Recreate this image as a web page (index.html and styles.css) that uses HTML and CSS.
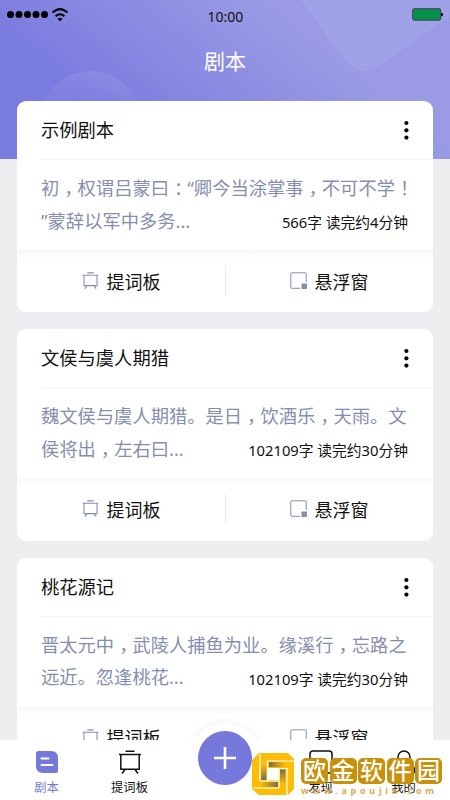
FILE: index.html
```html
<!DOCTYPE html>
<html lang="zh-CN">
<head>
<meta charset="utf-8">
<title>剧本</title>
<link rel="stylesheet" href="styles.css">
</head>
<body>
<svg width="0" height="0" class="defs">
  <symbol id="board" viewBox="0 0 24 24"><path d="M7.5 1.2h9M1 4.5h22M2.8 4.5v14.7h18.4V4.5M7 19.5l-3 4M17 19.5l3 4" fill="none" stroke="currentColor" stroke-width="1.5"/></symbol>
  <symbol id="float" viewBox="0 0 17 17"><path d="M10 16.3H1.8a1 1 0 0 1-1-1V1.8a1 1 0 0 1 1-1h13.4a1 1 0 0 1 1 1V10" fill="none" stroke="currentColor" stroke-width="1"/><rect x="11.5" y="11.5" width="5.5" height="5.5" rx=".8" fill="currentColor"/></symbol>
  <symbol id="more" viewBox="0 0 6 20"><circle cx="3.4" cy="3" r="2.1"/><circle cx="3.4" cy="10.3" r="2.1"/><circle cx="3.4" cy="17.6" r="2.1"/></symbol>
</svg>
<div class="app">
  <svg class="hero" viewBox="0 0 450 159">
    <defs>
      <linearGradient id="sky" gradientUnits="userSpaceOnUse" x1="150" y1="155" x2="270" y2="5"><stop offset="0" stop-color="#7a7bdf"/><stop offset="1" stop-color="#9a9be4"/></linearGradient>
      <linearGradient id="moon" x1="0" y1="0" x2="0" y2="1"><stop offset="0" stop-color="#fff" stop-opacity=".08"/><stop offset=".5" stop-color="#fff" stop-opacity="0"/></linearGradient>
    </defs>
    <rect width="450" height="159" fill="url(#sky)"/>
    <circle cx="90" cy="121" r="50" fill="url(#moon)"/>
    <path d="M301 0L342 56Q358 79 378 66L450 17V0Z" fill="#a4a6ea" opacity=".6"/>
  </svg>
  <div class="status">
    <svg width="64" height="16" viewBox="0 0 64 16"><g><circle cx="3.500" cy="7.500" r="3.500"/><circle cx="12" cy="7.500" r="3.500"/><circle cx="20.500" cy="7.500" r="3.500"/><circle cx="29" cy="7.500" r="3.500"/><circle cx="37.500" cy="7.500" r="3.500"/></g><g fill="none" stroke="#000" stroke-width="2"><path d="M45.600 5.600q7.400-7 14.800 0M48.600 9.200q4.400-4 8.800 0"/></g><path d="M50.500 11.800q2.500-2 5 0L53 14.500z"/></svg>
    <span class="time">10:00</span>
    <svg width="32" height="14" viewBox="0 0 32 14"><rect x=".7" y=".7" width="28" height="11.500" rx="1.500" fill="#059148" stroke="#4a3768"/><path d="M29 5h1q1 0 1 1.600t-1 1.600h-1z"/></svg>
  </div>
  <h1>剧本</h1>
  <main>
    <article class="card">
      <header><h2>示例剧本</h2><svg class="more"><use href="#more"/></svg></header>
      <div class="excerpt"><p>初<i>，</i>权谓吕蒙曰<i>：</i>“卿今当涂掌事<i>，</i>不可不学<i>！</i><br>”蒙辞以军中多务...</p><small>566字 读完约4分钟</small></div>
      <footer><a><svg><use href="#board"/></svg>提词板</a><a><svg><use href="#float"/></svg>悬浮窗</a></footer>
    </article>
    <article class="card">
      <header><h2>文侯与虞人期猎</h2><svg class="more"><use href="#more"/></svg></header>
      <div class="excerpt"><p>魏文侯与虞人期猎。是日<i>，</i>饮酒乐<i>，</i>天雨。文<br>侯将出<i>，</i>左右曰...</p><small>102109字 读完约30分钟</small></div>
      <footer><a><svg><use href="#board"/></svg>提词板</a><a><svg><use href="#float"/></svg>悬浮窗</a></footer>
    </article>
    <article class="card">
      <header><h2>桃花源记</h2><svg class="more"><use href="#more"/></svg></header>
      <div class="excerpt"><p>晋太元中<i>，</i>武陵人捕鱼为业。缘溪行<i>，</i>忘路之<br>远近。忽逢桃花...</p><small>102109字 读完约30分钟</small></div>
      <footer><a><svg><use href="#board"/></svg>提词板</a><a><svg><use href="#float"/></svg>悬浮窗</a></footer>
    </article>
  </main>
  <nav>
    <a class="on"><svg viewBox="0 0 24 24"><path d="M3.500 1H16q7 0 7 7v12.500q0 2.500-2.500 2.500H8q-7 0-7-7V3.500Q1 1 3.500 1z" fill="#7678dc"/><path d="M6.500 8.500h7M6.500 15h11" stroke="#fff" stroke-width="2" stroke-linecap="round"/></svg>剧本</a>
    <a><svg viewBox="0 0 24 24"><use href="#board"/></svg>提词板</a>
    <span></span>
    <a><svg viewBox="0 0 24 24"><rect x="1" y="1" width="22" height="22" rx="3" fill="none" stroke="#111" stroke-width="1.500"/><path d="M7 11h10" stroke="#111" stroke-width="1.500"/></svg>发现</a>
    <a><svg viewBox="0 0 24 24"><circle cx="12" cy="7" r="6" fill="none" stroke="#111" stroke-width="1.500"/><path d="M8 12Q1 15 1 22.500h22Q23 15 16 12" fill="none" stroke="#111" stroke-width="1.500"/></svg>我的</a>
  </nav>
  <div class="bump"></div>
  <div class="plus"><svg width="22" height="22" viewBox="0 0 22 22"><path d="M11 0v22M0 11h22" stroke="#fff" stroke-width="2.600"/></svg></div>
  <div class="mark">
    <svg width="43" height="43" viewBox="0 0 43 43">
      <defs>
        <linearGradient id="fh"><stop offset="0" stop-color="#7d6c45"/><stop offset="1" stop-color="#fdbd05"/></linearGradient>
        <linearGradient id="fv" x1="0" y1="1" x2="0" y2="0"><stop offset="0" stop-color="#7d6c45"/><stop offset=".8" stop-color="#fdbd05"/></linearGradient>
        <linearGradient id="fr" x1="1" x2="0"><stop offset="0" stop-color="#7d6c45"/><stop offset="1" stop-color="#fdbd05"/></linearGradient>
        <linearGradient id="fd" x1="0" y1="0" x2="0" y2="1"><stop offset="0" stop-color="#7d6c45"/><stop offset=".8" stop-color="#fdbd05"/></linearGradient>
      </defs>
      <path d="M7 0h29l6 6v30l-6 6H7l-7-6V7z" fill="#fdbd05"/>
      <path d="M9 8v19h5.500V8z" fill="url(#fv)"/><path d="M17 9h16v5H17z" fill="url(#fh)"/><path d="M28 16.500h5.500v18H28z" fill="url(#fd)"/><path d="M9 29h17v5H9z" fill="url(#fr)"/>
      <path d="M16 15.500h10.500V27H16z" fill="#fff"/>
      <path d="M15.500 7.500V28M15 8h27M17 15.500h17.500M27 15.500v19.500M8.500 28H26M8 1v27M35 15v27M1 35h26" stroke="#fff" stroke-width="1.200" fill="none"/>
    </svg>
    <div class="words"><div class="tiles"><b>欧</b><b>金</b><b>软</b><b>件</b><b>园</b></div><div class="url">www.apoujin.com</div></div>
  </div>
</div>
</body>
</html>
```
FILE: styles.css
```css
* { box-sizing: border-box; }
body { margin: 0; font-family: "Noto Sans", "Noto Sans CJK SC", sans-serif; color: #111; }
.defs { position: absolute; }
.app { position: relative; width: 450px; height: 800px; overflow: hidden; background: #eeeef1; display: flex; flex-direction: column; }
.hero { position: absolute; inset: 0 0 auto; width: 450px; height: 159px; }
.status { position: relative; height: 30px; padding: 0 6px 0 7px; display: grid; grid-template-columns: 1fr auto 1fr; align-items: center; }
.status svg:last-child { justify-self: end; }
.status .time { font: 14px/20px "Noto Sans"; padding-top: 3px; }
h1 { position: relative; margin: 0; height: 71px; font-size: 21px; font-weight: 400; line-height: 62px; color: #fff; text-align: center; }
main { position: relative; height: 639px; padding: 0 17px; overflow: hidden; display: flex; flex-direction: column; gap: 17px; }
.card { flex: none; height: 211.300px; border-radius: 9px; background: #fff; overflow: hidden; }
.card header { height: 59px; margin-left: 24px; padding-right: 24px; border-bottom: 1px solid #f5f5f7; display: flex; align-items: center; justify-content: space-between; }
h2 { margin: 0; padding-bottom: 2px; font-size: 18.300px; font-weight: 400; }
.more { width: 6px; height: 20px; }
.excerpt { height: 90px; padding: 12px 0 0 24px; position: relative; color: #858eae; }
.excerpt p { margin: 0; font-size: 18.300px; line-height: 32.500px; white-space: nowrap; }
.excerpt i { display: inline-block; width: 1em; text-indent: 5px; font-style: normal; }
.excerpt small { position: absolute; right: 25px; bottom: 18px; font-size: 14.750px; line-height: 20px; color: #111; }
.card footer { height: 62px; display: grid; grid-template-columns: 1fr 1fr; align-items: center; background: linear-gradient(#f8f8f8, #fff 8px); }
.card footer a { height: 30px; padding-bottom: 1px; display: flex; align-items: center; justify-content: center; gap: 8px; font-size: 18px; }
.card footer a + a { border-left: 1px solid #ececef; padding-right: 1px; }
.card footer svg { width: 17px; height: 17px; color: #858eae; }
nav { position: absolute; z-index: 2; left: 0; right: 0; bottom: 0; height: 60px; padding: 10px 5px 0; background: #fff; display: grid; grid-template-columns: 83px 83px 1fr 83px 83px; }
nav a { display: flex; flex-direction: column; align-items: center; gap: 5px; font-size: 12.300px; line-height: 18px; }
nav svg { width: 24px; height: 24px; }
nav .on { color: #7678dc; }
.bump { position: absolute; z-index: 1; left: 187px; top: 723px; width: 76px; height: 76px; border-radius: 50%; background: #fff; box-shadow: 0 0 8px #0001; }
.plus { position: absolute; z-index: 3; left: 198px; top: 731px; width: 54px; height: 54px; border-radius: 50%; background: #7678dc; display: grid; place-items: center; }
.mark { position: absolute; z-index: 4; left: 252px; top: 753px; display: flex; gap: 6px; }
.tiles { display: flex; gap: 1.500px; padding-top: 5px; }
.tiles b { width: 27px; height: 26px; border-radius: 5px; background: #c8910b; color: #fff; font-size: 23px; font-weight: 500; line-height: 25px; text-align: center; }
.url { padding-top: 1px; font: 700 9px/12px "Open Sans"; letter-spacing: 3.700px; color: #dda94f; }
```
